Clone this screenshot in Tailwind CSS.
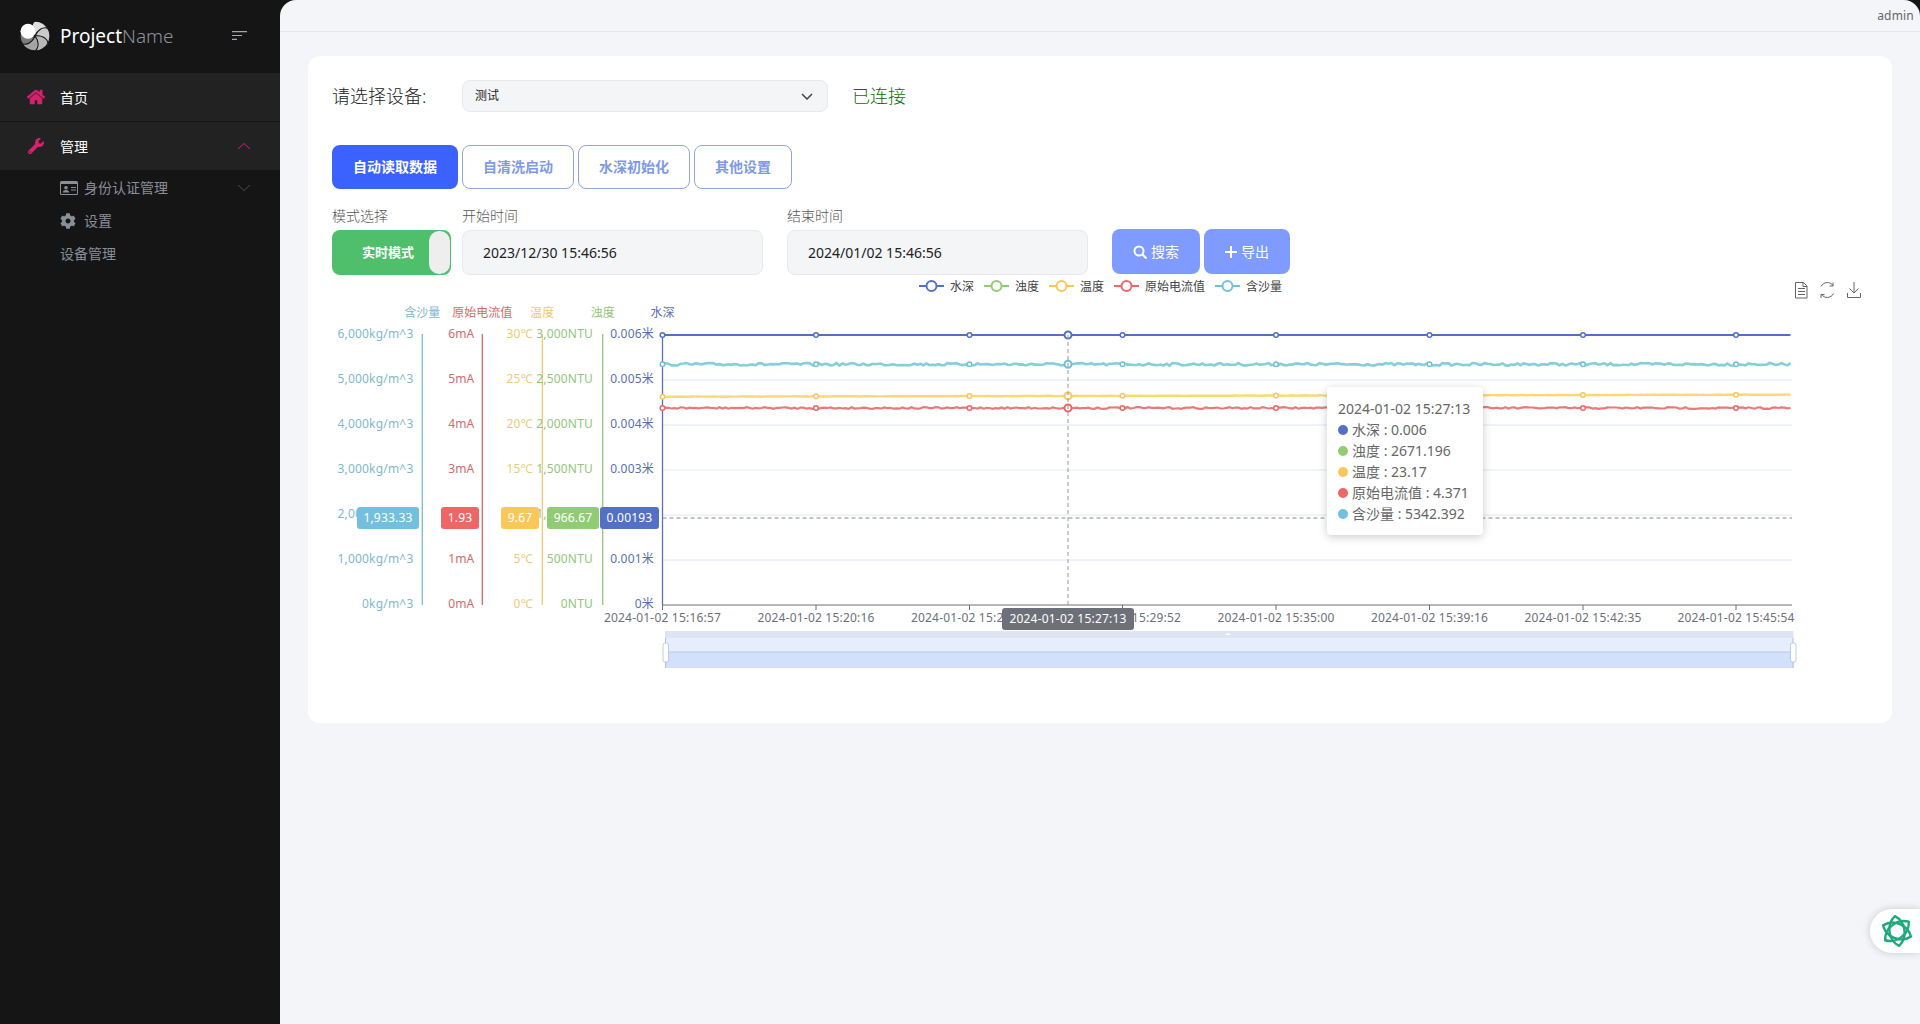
<!DOCTYPE html>
<html lang="zh-CN">
<head>
  <meta charset="UTF-8" />
  <title>ProjectName</title>
  <script src="https://cdn.jsdelivr.net/npm/@tailwindcss/browser@4"></script>
</head>
<body class="bg-[#151516] font-['Noto_Sans','Noto_Sans_CJK_SC',sans-serif]">
  <div class="relative flex h-[1024px] overflow-hidden">

    <!-- sidebar -->
    <aside class="w-[280px] shrink-0 text-sm">
      <div class="flex h-[73px] items-start pl-5 pt-5">
        <svg class="w-[30px] h-[32px]" viewBox="-16 -16 32 32">
          <g stroke="#151516" stroke-width="1.100">
            <path d="M0 0C-3 -6 -2 -13 3 -15.500C9 -15 14.500 -9 15 -4C10 -7 5 -6 0 0Z" fill="#dedede" transform="rotate(-12)"/>
            <path d="M0 0C-3 -6 -2 -13 3 -15.500C9 -15 14.500 -9 15 -4C10 -7 5 -6 0 0Z" fill="#cacaca" transform="rotate(48)"/>
            <path d="M0 0C-3 -6 -2 -13 3 -15.500C9 -15 14.500 -9 15 -4C10 -7 5 -6 0 0Z" fill="#b8b8b8" transform="rotate(108)"/>
            <path d="M0 0C-3 -6 -2 -13 3 -15.500C9 -15 14.500 -9 15 -4C10 -7 5 -6 0 0Z" fill="#a4a4a4" transform="rotate(168)"/>
            <path d="M0 0C-3 -6 -2 -13 3 -15.500C9 -15 14.500 -9 15 -4C10 -7 5 -6 0 0Z" fill="#7c7c7c" transform="rotate(228)"/>
          </g>
          <circle cx="-7.500" cy="-5" r="8" fill="#fff"/>
        </svg>
        <span class="ml-[10px] text-[19px] leading-[32px] text-white">Project<span class="font-light text-[#8d9096]">Name</span></span>
        <svg class="ml-auto mr-[33px] mt-[11px] w-[15px] h-[9px]" viewBox="0 0 15 9" fill="none" stroke="#a3a6ad" stroke-width="1.200">
          <path d="M0 .6h15M0 4.500h10M0 8.400h5"/>
        </svg>
      </div>

      <nav>
        <a class="flex h-[48px] items-center bg-[#222223] pl-[27px] text-white">
          <svg class="w-[18px] h-[16px]" viewBox="0 0 576 512" fill="#d6226e" stroke="#d6226e" stroke-width="16"><path d="M280.370 148.260L96 300.110V464a16 16 0 0 0 16 16l112.060-.29a16 16 0 0 0 15.920-16V368a16 16 0 0 1 16-16h64a16 16 0 0 1 16 16v95.640a16 16 0 0 0 16 16.050L464 480a16 16 0 0 0 16-16V300L295.670 148.260a12.190 12.190 0 0 0-15.300 0zM571.600 251.470L488 182.560V44.050a12 12 0 0 0-12-12h-56a12 12 0 0 0-12 12v72.610L318.470 43a48 48 0 0 0-61 0L4.340 251.470a12 12 0 0 0-1.600 16.900l25.500 31A12 12 0 0 0 45.150 301l235.220-193.740a12.190 12.190 0 0 1 15.300 0L530.900 301a12 12 0 0 0 16.900-1.600l25.500-31a12 12 0 0 0-1.700-16.930z"/></svg>
          <span class="ml-[15px] pt-px">首页</span>
        </a>
        <a class="mt-px flex h-[48px] items-center bg-[#222223] pl-[28px] pr-[30px] text-white">
          <svg class="w-[16px] h-[16px]" viewBox="0 0 512 512" fill="#d6226e"><path d="M507.730 109.100c-2.240-9.030-13.540-12.090-20.120-5.510l-74.360 74.360-67.880-11.310-11.310-67.880 74.360-74.360c6.620-6.620 3.430-17.900-5.660-20.160-47.380-11.740-99.550.91-136.580 37.930-39.640 39.640-50.550 97.100-34.050 147.200L18.740 402.760c-24.990 24.990-24.990 65.510 0 90.500 24.990 24.990 65.510 24.990 90.500 0l213.210-213.210c50.120 16.710 107.470 5.680 147.370-34.220 37.070-37.070 49.700-89.320 37.910-136.730zM64 472c-13.250 0-24-10.750-24-24 0-13.260 10.750-24 24-24s24 10.740 24 24c0 13.250-10.750 24-24 24z"/></svg>
          <span class="ml-[16px] pt-px">管理</span>
          <svg class="ml-auto w-[12px] h-[6px]" viewBox="0 0 12 6" fill="none" stroke="#d6226e"><path d="M0 6l6-5.500L12 6"/></svg>
        </a>
        <div class="text-[#8a8e96]">
          <div class="flex h-[35px] items-center pl-[60px] pr-[30px]">
            <svg class="w-[18px] h-[14px]" viewBox="0 0 18 14" fill="#8a8e96"><path fill-rule="evenodd" d="M1.500 0h15A1.500 1.500 0 0 1 18 1.500v11a1.500 1.500 0 0 1-1.500 1.500h-15A1.500 1.500 0 0 1 0 12.500v-11A1.500 1.500 0 0 1 1.500 0zM1 3v9.500a.5.500 0 0 0 .5.500h15a.5.500 0 0 0 .5-.5V3z"/><circle cx="6" cy="6.800" r="1.800"/><path d="M2.800 11.500c0-1.800 1.300-2.600 3.200-2.600s3.200.8 3.200 2.600zM11 6h5v1h-5zM11 8.500h5v1h-5z"/></svg>
            <span class="ml-[6px]">身份认证管理</span>
            <svg class="ml-auto w-[12px] h-[6px]" viewBox="0 0 12 6" fill="none" stroke="#4a4d55"><path d="M0 0l6 5.500L12 0"/></svg>
          </div>
          <div class="flex h-[31px] items-center pl-[60px]">
            <svg class="w-[16px] h-[16px]" viewBox="0 0 512 512" fill="#8a8e96"><path d="M487.400 315.700l-42.600-24.600c4.300-23.200 4.300-47 0-70.200l42.600-24.600c4.900-2.800 7.100-8.600 5.500-14-11.100-35.600-30-67.800-54.700-94.600-3.800-4.100-10-5.100-14.800-2.300L380.800 110c-17.900-15.400-38.500-27.300-60.800-35.100V25.800c0-5.600-3.900-10.500-9.400-11.700-36.700-8.200-74.300-7.800-109.200 0-5.500 1.200-9.400 6.100-9.400 11.700V75c-22.200 7.900-42.800 19.800-60.800 35.100L88.700 85.500c-4.900-2.800-11-1.900-14.800 2.300-24.700 26.700-43.600 58.900-54.700 94.600-1.700 5.400.6 11.200 5.500 14L67.300 221c-4.300 23.200-4.300 47 0 70.200l-42.600 24.600c-4.900 2.800-7.100 8.600-5.500 14 11.100 35.600 30 67.800 54.700 94.600 3.800 4.100 10 5.100 14.800 2.300l42.600-24.600c17.900 15.400 38.500 27.300 60.800 35.100v49.200c0 5.600 3.900 10.500 9.400 11.700 36.700 8.200 74.300 7.800 109.200 0 5.500-1.200 9.400-6.100 9.400-11.700v-49.200c22.200-7.900 42.800-19.800 60.800-35.100l42.600 24.600c4.900 2.800 11 1.900 14.800-2.300 24.700-26.700 43.600-58.900 54.700-94.600 1.500-5.500-.7-11.300-5.600-14.100zM256 336c-44.100 0-80-35.900-80-80s35.900-80 80-80 80 35.900 80 80-35.900 80-80 80z"/></svg>
            <span class="ml-[8px]">设置</span>
          </div>
          <div class="flex h-[35px] items-center pl-[60px]">设备管理</div>
        </div>
      </nav>
    </aside>

    <!-- main -->
    <main class="flex-1 rounded-t-2xl bg-[#f4f5f8]">
      <header class="flex h-[32px] items-center justify-end border-b border-[#e6e7ea] pr-[6px] text-xs text-[#666] tracking-[0.2px]">admin</header>

      <section class="ml-[28px] mr-[28px] mt-[24px] h-[667px] rounded-xl bg-white">
        <!-- device -->
        <div class="flex items-center pl-6 pt-6">
          <span class="w-[130px] text-[18px] font-light leading-8 text-[#222]">请选择设备:</span>
          <div class="flex h-8 w-[366px] items-center justify-between rounded-lg border border-[#e8e9ec] bg-[#f4f5f7] pl-3 pr-[14px] text-xs text-[#222]">
            测试
            <svg class="w-[12px] h-[7px]" viewBox="0 0 12 7" fill="none" stroke="#444" stroke-width="1.500"><path d="M1 1l5 5 5-5"/></svg>
          </div>
          <span class="ml-6 text-[18px] font-light text-[#0b700b]">已连接</span>
        </div>

        <!-- tabs -->
        <div class="mt-[33px] flex gap-1 pl-6 text-sm font-semibold">
          <button class="h-11 w-[126px] rounded-lg bg-[#3b62ff] text-white">自动读取数据</button>
          <button class="h-11 w-[112px] rounded-lg border border-[#8fa6e0] bg-white text-[#8099e6]">自清洗启动</button>
          <button class="h-11 w-[112px] rounded-lg border border-[#8fa6e0] bg-white text-[#8099e6]">水深初始化</button>
          <button class="h-11 w-[98px] rounded-lg border border-[#8fa6e0] bg-white text-[#8099e6]">其他设置</button>
        </div>

        <!-- filters -->
        <div class="mt-[17px] flex items-start pl-6 text-sm">
          <div class="w-[130px]">
            <div class="h-5 font-light leading-5 text-[#555]">模式选择</div>
            <div class="relative mt-1 flex h-[45px] w-[119px] items-center rounded-lg bg-[#4fbf6b] pl-[30px] text-[13px] font-semibold text-white">
              实时模式
              <span class="absolute right-[1px] top-[1px] h-[43px] w-[21px] rounded-[10px] bg-[#eeeeee]"></span>
            </div>
          </div>
          <div class="w-[325px]">
            <div class="h-5 font-light leading-5 text-[#555]">开始时间</div>
            <div class="mt-1 flex h-[45px] w-[301px] items-center rounded-lg border border-[#e8e9ec] bg-[#f4f5f7] pl-5 text-[#222]">2023/12/30 15:46:56</div>
          </div>
          <div class="w-[325px]">
            <div class="h-5 font-light leading-5 text-[#555]">结束时间</div>
            <div class="mt-1 flex h-[45px] w-[301px] items-center rounded-lg border border-[#e8e9ec] bg-[#f4f5f7] pl-5 text-[#222]">2024/01/02 15:46:56</div>
          </div>
          <div class="mt-[23px] flex gap-1 text-white">
            <button class="flex h-[45px] w-[88px] items-center justify-center gap-1 rounded-lg bg-[#7f9bff]">
              <svg class="w-[14px] h-[14px]" viewBox="0 0 14 14" fill="none" stroke="#fff" stroke-width="2"><circle cx="6" cy="6" r="4.500"/><path d="M9.500 9.500L13.500 13.500"/></svg>搜索
            </button>
            <button class="flex h-[45px] w-[86px] items-center justify-center gap-1 rounded-lg bg-[#7f9bff]">
              <svg class="w-[12px] h-[12px]" viewBox="0 0 12 12" fill="none" stroke="#fff" stroke-width="2"><path d="M6 0v12M0 6h12"/></svg>导出
            </button>
          </div>
        </div>

        <!-- chart -->
        <div class="relative h-[420px] text-[#666]">
          <svg id="chart" class="block w-[1584px] h-[420px] text-xs" viewBox="308 275 1584 420"></svg>
          <!-- tooltip -->
          <div class="absolute left-[1019px] top-[112px] w-[156px] h-[148px] rounded bg-white px-[11px] py-[11px] text-sm leading-[21px] shadow-[0_2px_10px_rgba(0,0,0,0.2)]">
            <div>2024-01-02 15:27:13</div>
            <div class="flex items-center"><span class="mr-1 h-[10px] w-[10px] rounded-full bg-[#5470c6]"></span>水深 : 0.006</div>
            <div class="flex items-center"><span class="mr-1 h-[10px] w-[10px] rounded-full bg-[#91cc75]"></span>浊度 : 2671.196</div>
            <div class="flex items-center"><span class="mr-1 h-[10px] w-[10px] rounded-full bg-[#fac858]"></span>温度 : 23.17</div>
            <div class="flex items-center"><span class="mr-1 h-[10px] w-[10px] rounded-full bg-[#ee6666]"></span>原始电流值 : 4.371</div>
            <div class="flex items-center"><span class="mr-1 h-[10px] w-[10px] rounded-full bg-[#73c0de]"></span>含沙量 : 5342.392</div>
          </div>
        </div>
      </section>
    </main>

    <!-- floating button -->
    <div class="absolute right-0 top-[909px] flex h-[44px] w-[50px] items-center rounded-l-[22px] bg-white pl-[10px] shadow-[0_0_8px_rgba(0,0,0,0.18)]">
      <svg class="w-[34px] h-[34px]" viewBox="-17 -17 34 34" fill="none" stroke="#1fa97c" stroke-width="2.400" stroke-linejoin="round">
        <path d="M-15 0C-8 -10 8 -10 15 0C8 10 -8 10 -15 0Z" transform="rotate(22)"/>
        <path d="M-15 0C-8 -10 8 -10 15 0C8 10 -8 10 -15 0Z" transform="rotate(82)"/>
        <path d="M-15 0C-8 -10 8 -10 15 0C8 10 -8 10 -15 0Z" transform="rotate(142)"/>
      </svg>
    </div>
  </div>

  <script>
    const COLORS = { water: '#5470c6', turb: '#91cc75', temp: '#fac858', cur: '#ee6666', sand: '#73c0de' };
    const GRID = [335, 380, 425, 470, 515, 560, 605];
    const LEFT = 662.5, RIGHT = 1792, LINE_END = 1791;
    const POINTS = [662.5, 816, 969.5, 1122.5, 1276, 1429.5, 1583, 1736];
    const HOVER = 1068;

    const axes = [
      { name: '含沙量', x: 422.3, right: 413.5, color: COLORS.sand, muted: '#7fb8d0', labels: ['6,000kg/m^3','5,000kg/m^3','4,000kg/m^3','3,000kg/m^3','2,000kg/m^3','1,000kg/m^3','0kg/m^3'], tag: ['1,933.33', 357, 419] },
      { name: '原始电流值', x: 482.3, right: 474.5, color: COLORS.cur, muted: '#d86a6a', labels: ['6mA','5mA','4mA','3mA','2mA','1mA','0mA'], tag: ['1.93', 441, 479] },
      { name: '温度', x: 542.3, right: 532.7, color: COLORS.temp, muted: '#eccb75', labels: ['30℃','25℃','20℃','15℃','10℃','5℃','0℃'], tag: ['9.67', 501, 539] },
      { name: '浊度', x: 602.7, right: 593, color: COLORS.turb, muted: '#93c67c', labels: ['3,000NTU','2,500NTU','2,000NTU','1,500NTU','1,000NTU','500NTU','0NTU'], tag: ['966.67', 547, 599] },
      { name: '水深', x: 662.5, right: 654, color: COLORS.water, muted: '#5a70b4', labels: ['0.006米','0.005米','0.004米','0.003米','0.002米','0.001米','0米'], tag: ['0.00193', 600, 659] },
    ];

    const series = [
      { color: COLORS.water, y0: 335, y1: 335, amp: 0, width: 2 },
      { color: '#84cfdc', dot: '#73c0d4', y0: 364.3, y1: 364.3, amp: 1.3, width: 2.6 },
      { color: '#fbd873', dot: COLORS.temp, y0: 396.7, y1: 394.6, amp: 0.15, width: 2.4 },
      { color: '#ea7a7a', dot: COLORS.cur, y0: 408, y1: 408, amp: 0.9, width: 2.2 },
    ];

    const text = (x, y, s, fill, anchor = 'middle', spacing = 0.2) =>
      `<text x="${x}" y="${y}" fill="${fill}" text-anchor="${anchor}" dominant-baseline="central" letter-spacing="${spacing}">${s}</text>`;

    let seed = 7;
    const rnd = () => (seed = (seed * 16807) % 2147483647) / 2147483647 - 0.5;

    let out = '';

    // legend
    [[919, 950, '水深', COLORS.water], [984, 1015, '浊度', COLORS.turb], [1049, 1080, '温度', COLORS.temp],
     [1114, 1145, '原始电流值', COLORS.cur], [1215, 1246, '含沙量', COLORS.sand]].forEach(([x, tx, s, c]) => {
      out += `<path d="M${x} 286h25" stroke="${c}" stroke-width="2"/><circle cx="${x + 12.5}" cy="286" r="5" fill="#fff" stroke="${c}" stroke-width="2"/>`;
      out += text(tx, 286, s, '#444', 'start', 0);
    });

    // toolbox
    out += `<g fill="none" stroke="#666" stroke-width="1">
      <path d="M1795.500 282.500h8l3.500 3.500v12h-11.500zM1803 282.500v4h4M1798 288.500h7M1798 291.500h7M1798 294.500h7"/>
      <path d="M1821 286.500a7 7 0 0 1 12-1M1833 282.500v3.500h-3.500M1833.500 293.500a7 7 0 0 1-12 1M1821 298v-3.500h3.500"/>
      <path d="M1854 282v11M1849.500 288.500l4.500 4.500 4.500-4.500M1847.500 293v4.500h13v-4.500"/>
    </g>`;

    // grid
    GRID.slice(1, 6).forEach(y => out += `<path d="M${LEFT} ${y}H${RIGHT}" stroke="#e0e6f1"/>`);

    // y axes
    axes.forEach(a => {
      out += `<path d="M${a.x} 334V605" stroke="${a.muted}" stroke-width="1.300"/>`;
      out += text(a.x, 312.7, a.name, a.muted, 'middle', 0);
      a.labels.forEach((l, i) => out += text(a.right, GRID[i] - 1.500, l, a.muted, 'end'));
    });

    // x axis
    out += `<path d="M${LEFT} 605H${RIGHT}" stroke="#6e7079"/>`;
    ['15:16:57','15:20:16','15:23:35','15:29:52','15:35:00','15:39:16','15:42:35','15:45:54'].forEach((t, i) => {
      const x = POINTS[i];
      out += `<path d="M${x} 605v5" stroke="#6e7079"/>`;
      out += text(x, 617, `2024-01-02 ${t}`, '#6e7079');
    });

    // series
    series.forEach(s => {
      const y = x => s.y0 + (s.y1 - s.y0) * (x - LEFT) / (LINE_END - LEFT);
      let pts = [];
      for (let x = LEFT; x <= LINE_END; x += 3) pts.push(`${x},${(y(x) + rnd() * s.amp * 2).toFixed(1)}`);
      out += `<polyline points="${pts.join(' ')}" fill="none" stroke="${s.color}" stroke-width="${s.width}"/>`;
      POINTS.forEach(x => out += `<circle cx="${x}" cy="${y(x).toFixed(1)}" r="2.300" fill="#fff" stroke="${s.dot || s.color}" stroke-width="1.500"/>`);
      out += `<circle cx="${HOVER}" cy="${y(HOVER).toFixed(1)}" r="3.500" fill="#fff" stroke="${s.dot || s.color}" stroke-width="2"/>`;
    });

    // crosshair
    out += `<path d="M${LEFT} 518H${RIGHT}" stroke="#888" stroke-dasharray="4 3"/>`;
    out += `<path d="M${HOVER} 335V605" stroke="#999" stroke-dasharray="4 3"/>`;

    // axis pointer tags
    axes.forEach(a => {
      const [s, x0, x1] = a.tag;
      out += `<rect x="${x0}" y="507" width="${x1 - x0}" height="22" rx="3" fill="${a.color}"/>`;
      out += text((x0 + x1) / 2, 517.500, s, '#fff');
    });
    out += `<rect x="1002" y="608" width="132" height="22" rx="3" fill="#6e7079"/>`;
    out += text(1068, 618.500, '2024-01-02 15:27:13', '#fff');

    // data zoom
    out += `<rect x="665" y="631" width="1128.500" height="7" fill="#dfe4f2"/>
      <rect x="665" y="638" width="1128.500" height="14" fill="#e6edfc"/>
      <rect x="665" y="652" width="1128.500" height="16" fill="#d2e0fb"/>
      <path d="M665 652H1793.500" stroke="#b6c9ee"/>
      <path d="M665.500 638V668M1793 638V668" stroke="#a9c0ec"/>
      <rect x="663" y="643" width="5.500" height="19" rx="2" fill="#fff" stroke="#bccbea"/>
      <rect x="1790.500" y="643" width="5.500" height="19" rx="2" fill="#fff" stroke="#bccbea"/>
      <rect x="1226" y="633.500" width="4" height="1.500" fill="#fff"/>`;

    document.getElementById('chart').innerHTML = out;
  </script>
</body>
</html>
